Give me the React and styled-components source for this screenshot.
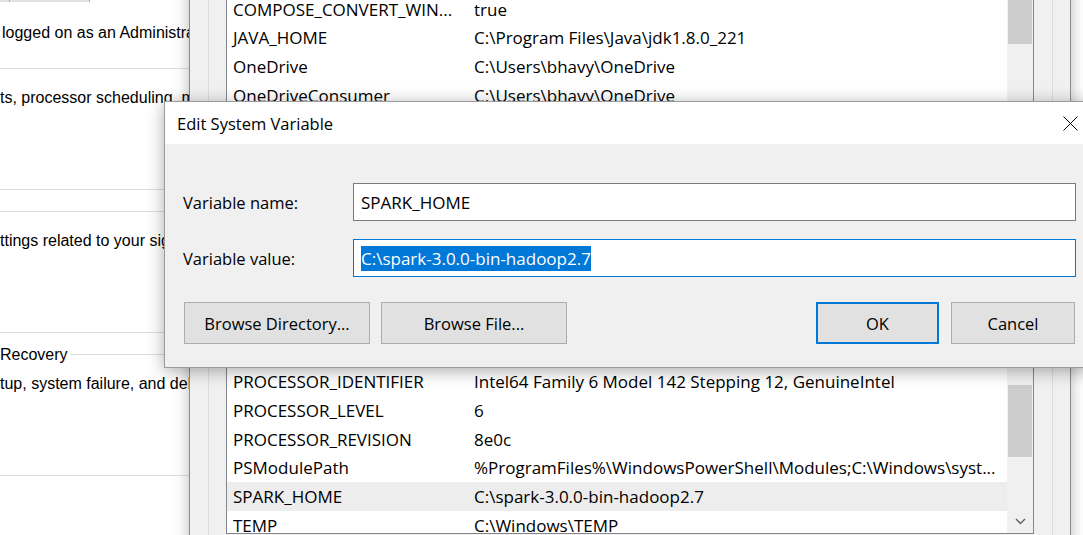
import React from 'react';
import styled, { createGlobalStyle } from 'styled-components';

const UI_FONT = `"Open Sans", "Noto Sans", "DejaVu Sans", sans-serif`;

const GlobalStyle = createGlobalStyle`
  html, body { margin: 0; padding: 0; background: #fff; }
  body { overflow: hidden; }
`;

const Desktop = styled.div`
  position: relative;
  width: 1083px;
  height: 535px;
  overflow: hidden;
  background: #fff;
`;

/* ---------- System Properties (back window) ---------- */
const SysWindow = styled.section`
  position: absolute;
  left: 0;
  top: 0;
  width: 320px;
  height: 535px;
  background: #fff;
  font-family: "Liberation Sans", Arial, sans-serif;
  font-size: 16px;
  line-height: 18px;
  color: #000;
  display: flex;
  flex-direction: column;
`;

const TopStrip = styled.div`
  display: flex;
  height: 2px;
  flex: none;
`;

const StripSeg = styled.div`
  width: ${p => p.$w}px;
  box-sizing: border-box;
  background: #e1e1e1;
  border-right: 1px solid #adadad;
`;

const Notice = styled.p`
  margin: 22px 0 0 2px;
  white-space: nowrap;
`;

const GroupBox = styled.div`
  position: relative;
  flex: none;
  margin-top: ${p => p.$gap}px;
  height: 122px;
  box-sizing: border-box;
  border-top: 1px solid #dcdcdc;
  border-bottom: 1px solid #dcdcdc;
  padding-top: 20px;
  white-space: nowrap;
`;

const GroupLegend = styled.span`
  position: absolute;
  top: -9px;
  left: 0;
  background: #fff;
  padding-right: 2px;
`;

/* ---------- Environment Variables window ---------- */
const EnvWindow = styled.section`
  position: absolute;
  left: 189px;
  top: -100px;
  width: 882px;
  height: 720px;
  box-sizing: border-box;
  border: 1px solid #8c8c8c;
  background: #f0f0f0;
  box-shadow: 0 0 14px rgba(0, 0, 0, 0.28);
  font-family: ${UI_FONT};
  font-size: 17px;
  color: #000;
  padding: 20px 17px 0 18px;
  overflow: hidden;
  display: flex;
  flex-direction: column;
`;

const GroupFrame = styled.div`
  flex: none;
  border: 1px solid #dcdcdc;
  padding: 17px 18px ${p => p.$padBottom}px 17px;
  margin-top: ${p => p.$gap}px;
  display: flex;
  flex-direction: column;
`;

const VarList = styled.div`
  width: 808px;
  height: ${p => p.$h}px;
  box-sizing: border-box;
  border: 1px solid #828790;
  background: #fff;
  display: flex;
  flex: none;
`;

const ListMain = styled.div`
  flex: 1;
  min-width: 0;
  display: flex;
  flex-direction: column;
  overflow: hidden;
`;

const ListHeader = styled.div`
  flex: none;
  height: 26px;
  box-sizing: border-box;
  display: flex;
  align-items: center;
  border-bottom: 1px solid #e5e5e5;
  white-space: nowrap;
  font-size: 16px;
`;

const Row = styled.div`
  flex: none;
  height: 28.7px;
  display: flex;
  align-items: center;
  white-space: nowrap;
  background: ${p => (p.$selected ? '#ededed' : 'transparent')};
`;

const NameCell = styled.span`
  flex: none;
  width: 241px;
  box-sizing: border-box;
  padding-left: 6px;
  overflow: hidden;
`;

const ValueCell = styled.span`
  padding-left: 6px;
`;

const ScrollBar = styled.div`
  flex: none;
  width: 26px;
  background: #f0f0f0;
  display: flex;
  flex-direction: column;
`;

const ScrollArrow = styled.div`
  flex: none;
  height: 24px;
  display: flex;
  align-items: center;
  justify-content: center;
`;

const ScrollTrack = styled.div`
  flex: 1;
  padding: ${p => p.$offset}px 1px 0;
`;

const Thumb = styled.div`
  height: ${p => p.$h}px;
  background: #cdcdcd;
`;

const ListButtons = styled.div`
  display: flex;
  justify-content: flex-end;
  gap: 10px;
  margin-top: 10px;
`;

const SmallButton = styled.button`
  width: 110px;
  height: 30px;
  box-sizing: border-box;
  padding: 0;
  background: #e1e1e1;
  border: 1px solid #adadad;
  font-family: inherit;
  font-size: 16px;
  color: #000;
`;

/* ---------- Edit System Variable dialog ---------- */
const Dialog = styled.section`
  position: absolute;
  left: 164px;
  top: 101px;
  width: 929px;
  box-sizing: border-box;
  border: 1px solid #9a9a9a;
  background: #f0f0f0;
  box-shadow: 0 3px 16px rgba(0, 0, 0, 0.33);
  font-family: ${UI_FONT};
  font-size: 16.5px;
  color: #000;
`;

const TitleBar = styled.header`
  height: 42px;
  background: #fff;
  display: flex;
  align-items: center;
  padding-left: 12px;
`;

const Title = styled.h1`
  margin: 0;
  font-size: 16.5px;
  font-weight: 400;
`;

const CloseButton = styled.button`
  margin-left: auto;
  margin-right: 7px;
  width: 30px;
  height: 30px;
  padding: 0;
  border: 0;
  background: transparent;
  display: flex;
  align-items: center;
  justify-content: center;
`;

const Body = styled.div`
  padding: 39px 16px 23px 18px;
  display: flex;
  flex-direction: column;
`;

const FieldRow = styled.div`
  display: grid;
  grid-template-columns: 170px 1fr;
  align-items: center;
  & + & { margin-top: 18px; }
`;

const Label = styled.label``;

const TextBox = styled.div`
  height: 38px;
  box-sizing: border-box;
  border: 1px solid ${p => (p.$focused ? '#0078d7' : '#7a7a7a')};
  background: #fff;
  display: flex;
  align-items: center;
  padding: 0 7px;
  white-space: nowrap;
  font-size: 17px;
`;

const Selection = styled.span`
  background: #0078d7;
  color: #fff;
  line-height: 25px;
`;

const ButtonRow = styled.div`
  display: flex;
  gap: 11px;
  margin-top: 25px;
  padding: 0 1px;
`;

const ButtonGroup = styled.div`
  display: flex;
  gap: 12px;
  margin-left: auto;
`;

const DlgButton = styled.button`
  width: ${p => p.$w}px;
  height: 42px;
  box-sizing: border-box;
  padding: 0;
  background: #e1e1e1;
  border: ${p => (p.$default ? '2px solid #0078d7' : '1px solid #adadad')};
  font-family: inherit;
  font-size: 16.5px;
  color: #000;
`;

const userVariables = [
  ['ChocolateyLastPathUpdate', '132418572391827364'],
  ['COMPOSE_CONVERT_WIN...', 'true'],
  ['JAVA_HOME', 'C:\\Program Files\\Java\\jdk1.8.0_221'],
  ['OneDrive', 'C:\\Users\\bhavy\\OneDrive'],
  ['OneDriveConsumer', 'C:\\Users\\bhavy\\OneDrive'],
  ['Path', 'C:\\Users\\bhavy\\AppData\\Local\\Microsoft\\WindowsApps;'],
  ['TEMP', 'C:\\Users\\bhavy\\AppData\\Local\\Temp'],
  ['TMP', 'C:\\Users\\bhavy\\AppData\\Local\\Temp'],
];

const systemVariables = [
  ['PATHEXT', '.COM;.EXE;.BAT;.CMD;.VBS;.VBE;.JS;.JSE;.WSF;.WSH;.MSC'],
  ['PROCESSOR_ARCHITECTURE', 'AMD64'],
  ['PROCESSOR_IDENTIFIER', 'Intel64 Family 6 Model 142 Stepping 12, GenuineIntel'],
  ['PROCESSOR_LEVEL', '6'],
  ['PROCESSOR_REVISION', '8e0c'],
  ['PSModulePath', '%ProgramFiles%\\WindowsPowerShell\\Modules;C:\\Windows\\syst...'],
  ['SPARK_HOME', 'C:\\spark-3.0.0-bin-hadoop2.7', true],
  ['TEMP', 'C:\\Windows\\TEMP'],
  ['TMP', 'C:\\Windows\\TEMP'],
];

const ChevronDown = () => (
  <svg width="11" height="7" viewBox="0 0 11 7">
    <polyline points="1,1 5.5,5.5 10,1" fill="none" stroke="#606060" strokeWidth="1.4" />
  </svg>
);

const ChevronUp = () => (
  <svg width="11" height="7" viewBox="0 0 11 7">
    <polyline points="1,6 5.5,1.5 10,6" fill="none" stroke="#606060" strokeWidth="1.4" />
  </svg>
);

const CloseIcon = () => (
  <svg width="15" height="15" viewBox="0 0 15 15">
    <path d="M0.5 0.5 L14.5 14.5 M14.5 0.5 L0.5 14.5" stroke="#000" strokeWidth="1" fill="none" />
  </svg>
);

const VariableList = ({ rows, height, thumbOffset, thumbHeight }) => (
  <VarList $h={height}>
    <ListMain>
      <ListHeader>
        <NameCell>Variable</NameCell>
        <ValueCell>Value</ValueCell>
      </ListHeader>
      {rows.map(([name, value, selected]) => (
        <Row key={name} $selected={selected}>
          <NameCell>{name}</NameCell>
          <ValueCell>{value}</ValueCell>
        </Row>
      ))}
    </ListMain>
    <ScrollBar>
      <ScrollArrow><ChevronUp /></ScrollArrow>
      <ScrollTrack $offset={thumbOffset}>
        <Thumb $h={thumbHeight} />
      </ScrollTrack>
      <ScrollArrow><ChevronDown /></ScrollArrow>
    </ScrollBar>
  </VarList>
);

export default function App() {
  return (
    <>
      <GlobalStyle />
      <Desktop>
        <SysWindow>
          <TopStrip>
            <StripSeg $w={10} />
            <StripSeg $w={80} />
          </TopStrip>
          <Notice>logged on as an Administrator to make most of these changes.</Notice>
          <GroupBox $gap={26}>ts, processor scheduling, memory usage, and virtual memory</GroupBox>
          <GroupBox $gap={21}>ttings related to your sign-in</GroupBox>
          <GroupBox $gap={21}>
            <GroupLegend>Recovery</GroupLegend>
            tup, system failure, and debugging information
          </GroupBox>
        </SysWindow>

        <EnvWindow>
          <GroupFrame $gap={0} $padBottom={10}>
            <VariableList rows={userVariables} height={263} thumbOffset={6} thumbHeight={74} />
            <ListButtons>
              <SmallButton>New...</SmallButton>
              <SmallButton>Edit...</SmallButton>
              <SmallButton>Delete</SmallButton>
            </ListButtons>
          </GroupFrame>
          <GroupFrame $gap={12} $padBottom={60}>
            <VariableList rows={systemVariables} height={251} thumbOffset={77} thumbHeight={72} />
          </GroupFrame>
        </EnvWindow>

        <Dialog>
          <TitleBar>
            <Title>Edit System Variable</Title>
            <CloseButton aria-label="Close"><CloseIcon /></CloseButton>
          </TitleBar>
          <Body>
            <FieldRow>
              <Label>Variable name:</Label>
              <TextBox>SPARK_HOME</TextBox>
            </FieldRow>
            <FieldRow>
              <Label>Variable value:</Label>
              <TextBox $focused>
                <Selection>C:\spark-3.0.0-bin-hadoop2.7</Selection>
              </TextBox>
            </FieldRow>
            <ButtonRow>
              <DlgButton $w={186}>Browse Directory...</DlgButton>
              <DlgButton $w={186}>Browse File...</DlgButton>
              <ButtonGroup>
                <DlgButton $w={123} $default>OK</DlgButton>
                <DlgButton $w={124}>Cancel</DlgButton>
              </ButtonGroup>
            </ButtonRow>
          </Body>
        </Dialog>
      </Desktop>
    </>
  );
}
